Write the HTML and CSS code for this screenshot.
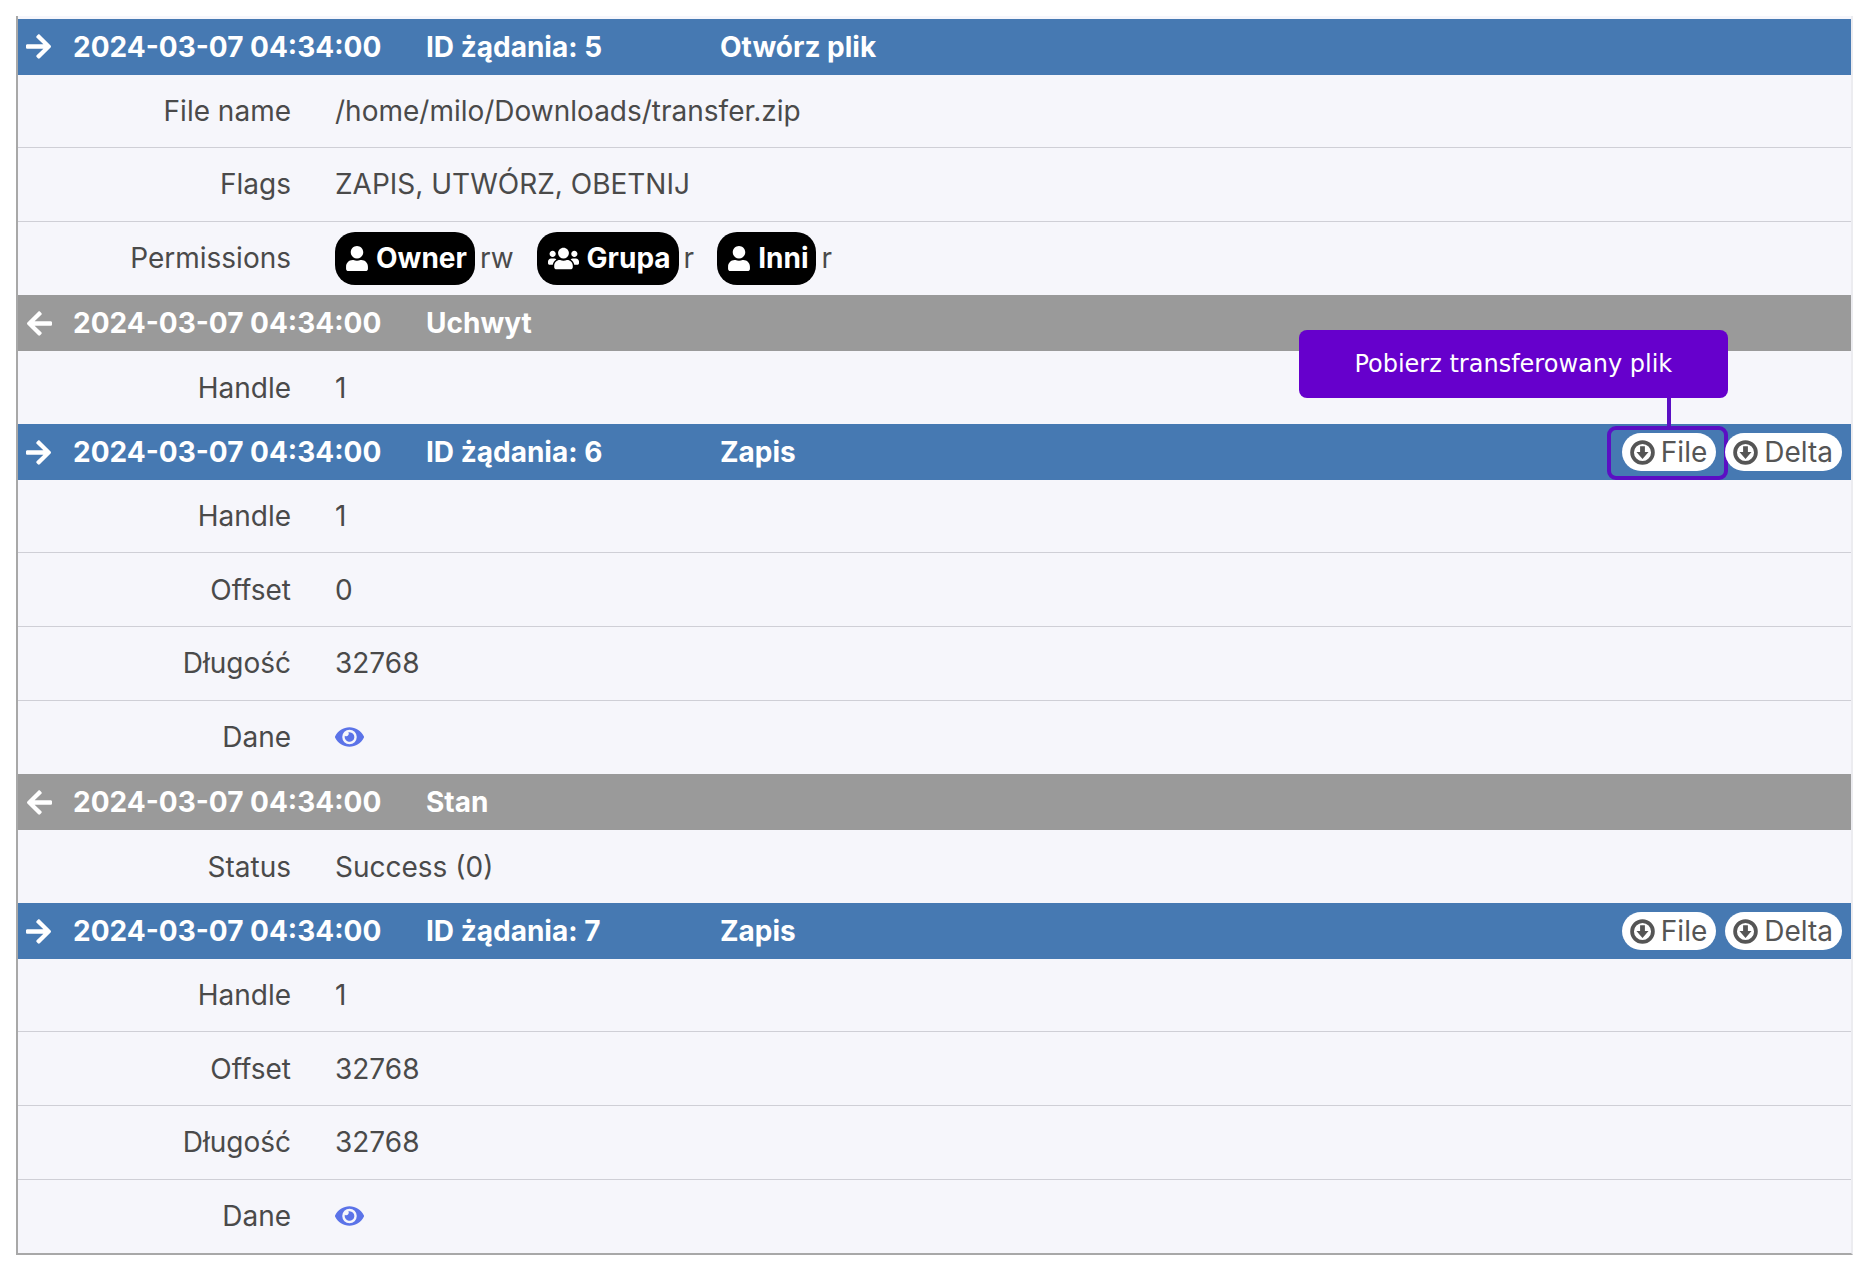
FILE: index.html
```html
<!DOCTYPE html>
<html lang="pl">
<head>
<meta charset="utf-8">
<title>Transfer</title>
<link rel="stylesheet" href="styles.css">
</head>
<body>
<svg class="defs" aria-hidden="true">
  <symbol id="i-right" viewBox="0 0 448 512"><path d="M190.5 66.9l22.2-22.2c9.4-9.4 24.6-9.4 33.9 0L441 239c9.4 9.4 9.4 24.6 0 33.9L246.6 467.3c-9.4 9.4-24.6 9.4-33.9 0l-22.2-22.2c-9.5-9.5-9.3-25 .4-34.3L311.4 296H24c-13.3 0-24-10.7-24-24v-32c0-13.3 10.7-24 24-24h287.4L190.9 101.2c-9.8-9.3-10-24.8-.4-34.3z"/></symbol>
  <symbol id="i-left" viewBox="0 0 448 512"><path d="M257.5 445.1l-22.2 22.2c-9.4 9.4-24.6 9.4-33.9 0L7 273c-9.4-9.4-9.4-24.6 0-33.9L201.4 44.7c9.4-9.4 24.6-9.4 33.9 0l22.2 22.2c9.5 9.5 9.3 25-.4 34.3L136.6 216H424c13.3 0 24 10.7 24 24v32c0 13.3-10.7 24-24 24H136.6l120.5 114.8c9.8 9.3 10 24.8.4 34.3z"/></symbol>
  <symbol id="i-user" viewBox="0 0 448 512"><path d="M224 256c70.7 0 128-57.3 128-128S294.7 0 224 0 96 57.3 96 128s57.3 128 128 128zm89.6 32h-16.7c-22.2 10.2-46.9 16-72.9 16s-50.6-5.8-72.9-16h-16.7C60.2 288 0 348.2 0 422.4V464c0 26.5 21.5 48 48 48h352c26.5 0 48-21.5 48-48v-41.6c0-74.2-60.2-134.4-134.4-134.4z"/></symbol>
  <symbol id="i-users" viewBox="0 0 640 512"><path d="M96 224c35.3 0 64-28.7 64-64s-28.7-64-64-64-64 28.7-64 64 28.7 64 64 64zm448 0c35.3 0 64-28.7 64-64s-28.7-64-64-64-64 28.7-64 64 28.7 64 64 64zm32 32h-64c-17.6 0-33.5 7.1-45.1 18.6 40.3 22.1 68.9 62 75.1 109.4h66c17.7 0 32-14.3 32-32v-32c0-35.3-28.7-64-64-64zm-256 0c61.9 0 112-50.1 112-112S381.9 32 320 32 208 82.1 208 144s50.1 112 112 112zm76.8 32h-8.3c-20.8 10-43.9 16-68.5 16s-47.6-6-68.5-16h-8.3C179.6 288 128 339.6 128 403.2V432c0 26.5 21.5 48 48 48h288c26.5 0 48-21.5 48-48v-28.8c0-63.6-51.6-115.2-115.2-115.2zm-223.7-13.4C161.5 263.1 145.6 256 128 256H64c-35.3 0-64 28.7-64 64v32c0 17.7 14.3 32 32 32h65.9c6.3-47.4 34.9-87.3 75.2-109.4z"/></symbol>
  <symbol id="i-down" viewBox="0 0 24 24"><circle cx="12" cy="12" r="10" fill="none" stroke="currentColor" stroke-width="3.6"/><path d="M9.7 6h4.6v5.4h3.5L12 18.2 6.2 11.4h3.5z"/></symbol>
  <symbol id="i-eye" viewBox="0 0 576 512"><path d="M572.52 241.4C518.29 135.59 410.93 64 288 64S57.68 135.64 3.48 241.41a32.35 32.35 0 0 0 0 29.19C57.71 376.41 165.07 448 288 448s230.32-71.64 284.52-177.41a32.35 32.35 0 0 0 0-29.19zM288 400a144 144 0 1 1 144-144 143.93 143.93 0 0 1-144 144zm0-240a95.31 95.31 0 0 0-25.31 3.79 47.85 47.85 0 0 1-66.9 66.9A95.78 95.78 0 1 0 288 160z"/></symbol>
</svg>

<main class="log">
  <div class="head head-req">
    <svg class="dir"><use href="#i-right"/></svg>
    <span class="time">2024-03-07 04:34:00</span>
    <span class="reqid">ID żądania: 5</span>
    <span class="title">Otwórz plik</span>
  </div>
  <div class="row"><span class="key">File name</span><span class="val">/home/milo/Downloads/transfer.zip</span></div>
  <div class="row"><span class="key">Flags</span><span class="val">ZAPIS, UTWÓRZ, OBETNIJ</span></div>
  <div class="row"><span class="key">Permissions</span>
    <span class="val perms">
      <span class="perm"><span class="badge"><svg class="bi"><use href="#i-user"/></svg>Owner</span>rw</span>
      <span class="perm"><span class="badge"><svg class="bi bi-wide"><use href="#i-users"/></svg>Grupa</span>r</span>
      <span class="perm"><span class="badge"><svg class="bi"><use href="#i-user"/></svg>Inni</span>r</span>
    </span>
  </div>

  <div class="head head-res">
    <svg class="dir"><use href="#i-left"/></svg>
    <span class="time">2024-03-07 04:34:00</span>
    <span class="title">Uchwyt</span>
  </div>
  <div class="row"><span class="key">Handle</span><span class="val">1</span></div>

  <div class="head head-req">
    <svg class="dir"><use href="#i-right"/></svg>
    <span class="time">2024-03-07 04:34:00</span>
    <span class="reqid">ID żądania: 6</span>
    <span class="title">Zapis</span>
    <span class="actions">
      <span class="pill pill-marked"><svg class="pi"><use href="#i-down"/></svg>File
        <span class="mark"></span>
        <span class="stem"></span>
        <span class="tip">Pobierz transferowany plik</span>
      </span>
      <span class="pill"><svg class="pi"><use href="#i-down"/></svg>Delta</span>
    </span>
  </div>
  <div class="row"><span class="key">Handle</span><span class="val">1</span></div>
  <div class="row"><span class="key">Offset</span><span class="val">0</span></div>
  <div class="row"><span class="key">Długość</span><span class="val">32768</span></div>
  <div class="row"><span class="key">Dane</span><span class="val"><svg class="eye"><use href="#i-eye"/></svg></span></div>

  <div class="head head-res">
    <svg class="dir"><use href="#i-left"/></svg>
    <span class="time">2024-03-07 04:34:00</span>
    <span class="title">Stan</span>
  </div>
  <div class="row"><span class="key">Status</span><span class="val">Success (0)</span></div>

  <div class="head head-req">
    <svg class="dir"><use href="#i-right"/></svg>
    <span class="time">2024-03-07 04:34:00</span>
    <span class="reqid">ID żądania: 7</span>
    <span class="title">Zapis</span>
    <span class="actions">
      <span class="pill"><svg class="pi"><use href="#i-down"/></svg>File</span>
      <span class="pill"><svg class="pi"><use href="#i-down"/></svg>Delta</span>
    </span>
  </div>
  <div class="row"><span class="key">Handle</span><span class="val">1</span></div>
  <div class="row"><span class="key">Offset</span><span class="val">32768</span></div>
  <div class="row"><span class="key">Długość</span><span class="val">32768</span></div>
  <div class="row"><span class="key">Dane</span><span class="val"><svg class="eye"><use href="#i-eye"/></svg></span></div>
</main>
</body>
</html>
```

FILE: styles.css
```css
* { box-sizing: border-box; }
html, body { background: #fff; }
body {
  margin: 0;
  padding: 16px 18px 0 16px;
  font-family: Inter, "Liberation Sans", sans-serif;
  font-size: 28px;
  color: #4a4a4a;
}
.defs { display: none; }
.log {
  display: flex;
  flex-direction: column;
  background: #f6f6fb;
  padding-top: 3px;
  border-left: 2px solid #a8a8a8;
  border-right: 2px solid #ececf0;
  border-bottom: 2px solid #a8a8a8;
}
.head {
  display: flex;
  align-items: center;
  height: 55.5px;
  padding: 0 9px 0 8px;
  color: #fff;
  font-weight: 700;
}
.head-req { background: #4679b2; }
.head-res { background: #9a9a9a; }
.dir { width: 25px; height: 29px; fill: #fff; margin-right: 22px; flex: none; }
.head-res .dir { margin-left: 1px; margin-right: 21px; }
.time { width: 353px; flex: none; }
.reqid { width: 294px; flex: none; }
.actions { margin-left: auto; display: flex; gap: 9px; font-weight: 400; }
.pill {
  position: relative;
  display: flex;
  align-items: center;
  height: 38px;
  padding: 0 9px 0 8px;
  gap: 6px;
  background: #fff;
  color: #555;
  border-radius: 19px;
}
.pi { width: 25px; height: 25px; fill: #555; color: #555; }
.mark {
  position: absolute;
  left: -15px;
  right: -12px;
  top: -7px;
  bottom: -9px;
  border: 4px solid #5b0fc4;
  border-radius: 9px;
}
.stem {
  position: absolute;
  left: 45px;
  bottom: 45px;
  width: 4px;
  height: 29px;
  background: #5b0fc4;
}
.tip {
  position: absolute;
  left: -323px;
  bottom: 73px;
  width: 429px;
  height: 68px;
  display: flex;
  align-items: center;
  justify-content: center;
  background: #6600cc;
  color: #fff;
  border-radius: 8px;
  font-family: "DejaVu Sans", sans-serif;
  font-size: 24px;
  white-space: nowrap;
}
.row {
  display: flex;
  align-items: center;
  height: 73.6px;
  gap: 44px;
  border-bottom: 1px solid #cfcfd6;
}
.row:has(+ .head), .row:last-child { border-bottom: 0; }
.key { width: 273px; flex: none; text-align: right; }
.val { display: flex; align-items: center; }
.perms { gap: 23px; }
.perm { display: flex; align-items: center; gap: 5px; }
.badge {
  display: flex;
  align-items: center;
  height: 53px;
  padding: 0 8px 0 11px;
  gap: 8px;
  background: #000;
  color: #fff;
  font-weight: 700;
  border-radius: 20px;
}
.bi { width: 22px; height: 25px; fill: #fff; }
.bi-wide { width: 31px; }
.eye { width: 29px; height: 26px; fill: #5b73e8; }
```
